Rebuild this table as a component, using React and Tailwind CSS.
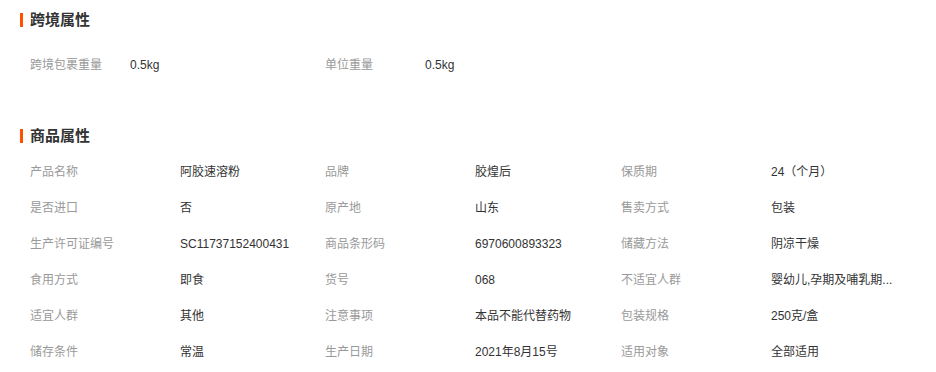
const crossBorder = [
  { label: "跨境包裹重量", value: "0.5kg" },
  { label: "单位重量", value: "0.5kg" },
];

const productAttrs = [
  { label: "产品名称", value: "阿胶速溶粉" },
  { label: "品牌", value: "胶煌后" },
  { label: "保质期", value: "24（个月）" },
  { label: "是否进口", value: "否" },
  { label: "原产地", value: "山东" },
  { label: "售卖方式", value: "包装" },
  { label: "生产许可证编号", value: "SC11737152400431" },
  { label: "商品条形码", value: "6970600893323" },
  { label: "储藏方法", value: "阴凉干燥" },
  { label: "食用方式", value: "即食" },
  { label: "货号", value: "068" },
  { label: "不适宜人群", value: "婴幼儿,孕期及哺乳期..." },
  { label: "适宜人群", value: "其他" },
  { label: "注意事项", value: "本品不能代替药物" },
  { label: "包装规格", value: "250克/盒" },
  { label: "储存条件", value: "常温" },
  { label: "生产日期", value: "2021年8月15号" },
  { label: "适用对象", value: "全部适用" },
];

function SectionTitle({ children }) {
  return (
    <div className="flex items-center h-6 pl-5">
      <span className="w-[3px] h-[14px] bg-[#ff5000] mr-[7px]" />
      <h3 className="text-[15px] font-bold text-[#333] leading-6">{children}</h3>
    </div>
  );
}

function AttrGrid({ items, labelWidth }) {
  return (
    <div className="grid grid-cols-[295px_296px_1fr] pl-[30px]">
      {items.map((item) => (
        <div key={item.label} className="flex items-center h-9 text-xs">
          <span className={`text-[#999] shrink-0 ${labelWidth}`}>{item.label}</span>
          <span className="text-[#333] whitespace-nowrap">{item.value}</span>
        </div>
      ))}
    </div>
  );
}

export default function App() {
  return (
    <div
      className="w-[936px] h-[372px] bg-white overflow-hidden"
      style={{ fontFamily: '"Liberation Sans", "Noto Sans CJK SC", sans-serif' }}
    >
      {/* 跨境属性 */}
      <div className="pt-2">
        <SectionTitle>跨境属性</SectionTitle>
        <div className="mt-[15px]">
          <AttrGrid items={crossBorder} labelWidth="w-[100px]" />
        </div>
      </div>

      {/* 商品属性 */}
      <div className="mt-[41px]">
        <SectionTitle>商品属性</SectionTitle>
        <div className="mt-[6px]">
          <AttrGrid items={productAttrs} labelWidth="w-[150px]" />
        </div>
      </div>
    </div>
  );
}
